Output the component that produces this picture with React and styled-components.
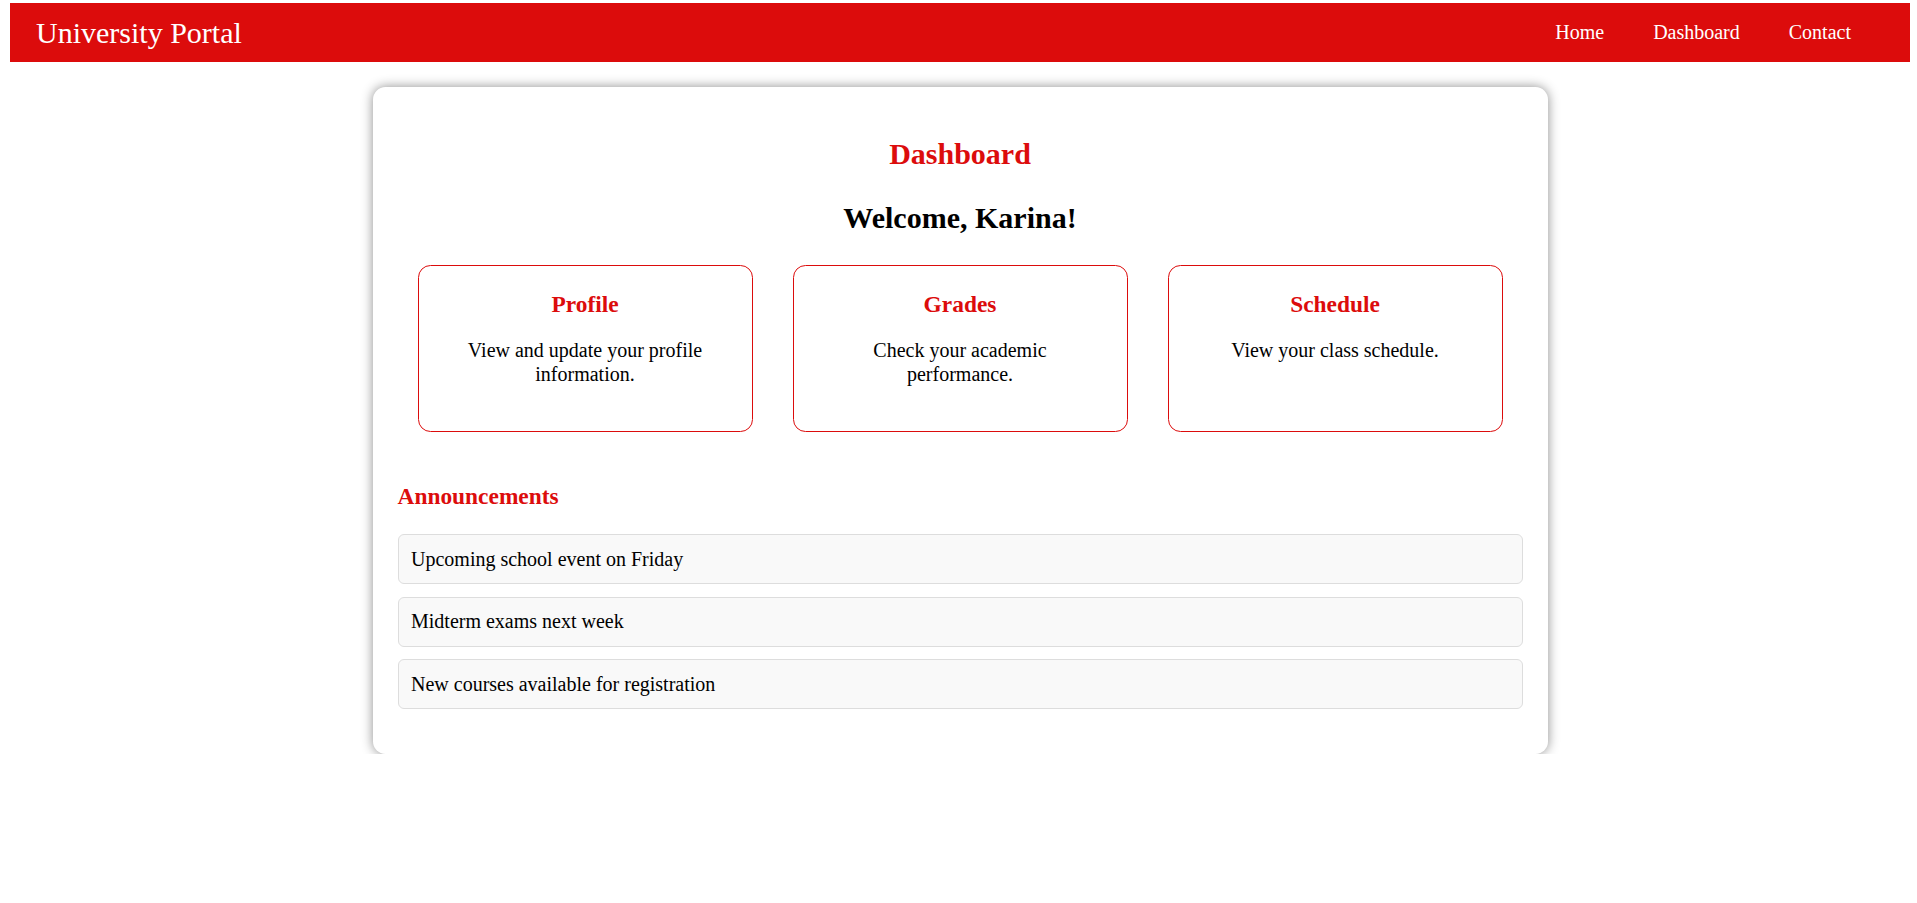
import styled, { createGlobalStyle } from "styled-components";

const GlobalStyle = createGlobalStyle`
  * {
    box-sizing: border-box;
  }
  body {
    margin: 3px 7px 0 10px;
    font-family: "Liberation Serif", "Times New Roman", serif;
    background: #fff;
    color: #000;
  }
`;

const RED = "#dc0c0c";

const Header = styled.header`
  display: flex;
  align-items: center;
  justify-content: space-between;
  background: ${RED};
  padding: 12.5px 59px 12.5px 26px;
`;

const Brand = styled.h1`
  margin: 0;
  font-size: 30px;
  font-weight: normal;
  color: #fff;
`;

const Nav = styled.nav`
  display: flex;
  gap: 49px;
`;

const NavLink = styled.a`
  color: #fff;
  font-size: 20px;
  text-decoration: none;
  cursor: pointer;
`;

const Panel = styled.main`
  width: 1175px;
  margin: 25px auto 0;
  padding: 25px;
  background: #fff;
  border-radius: 12.5px;
  box-shadow: 0 0 12px rgba(0, 0, 0, 0.45);
`;

const PageTitle = styled.h2`
  margin: 25px 0 0;
  font-size: 30px;
  text-align: center;
  color: ${RED};
`;

const Welcome = styled.h2`
  margin: 30px 0 0;
  font-size: 30px;
  text-align: center;
`;

const Tiles = styled.div`
  display: flex;
  margin-top: 30px;
`;

const Tile = styled.section`
  flex: 1;
  margin: 0 20px;
  padding: 25px;
  border: 1px solid ${RED};
  border-radius: 12.5px;
  text-align: center;
`;

const TileTitle = styled.h3`
  margin: 0;
  font-size: 23.4px;
  color: ${RED};
`;

const TileText = styled.p`
  margin: 21px 0 20px;
  font-size: 20px;
  line-height: 23.5px;
`;

const SectionTitle = styled.h3`
  margin: 51px 0 24px;
  font-size: 23.4px;
  color: ${RED};
`;

const List = styled.ul`
  list-style: none;
  margin: 0 0 20px;
  padding: 0;
  display: flex;
  flex-direction: column;
  gap: 12.5px;
`;

const Item = styled.li`
  padding: 12.5px;
  font-size: 20px;
  background: #f9f9f9;
  border: 1px solid #ddd;
  border-radius: 6px;
`;

const tiles = [
  { title: "Profile", text: "View and update your profile information." },
  { title: "Grades", text: "Check your academic performance." },
  { title: "Schedule", text: "View your class schedule." },
];

const news = [
  "Upcoming school event on Friday",
  "Midterm exams next week",
  "New courses available for registration",
];

export default function App() {
  return (
    <>
      <GlobalStyle />
      <Header>
        <Brand>University Portal</Brand>
        <Nav>
          <NavLink>Home</NavLink>
          <NavLink>Dashboard</NavLink>
          <NavLink>Contact</NavLink>
        </Nav>
      </Header>

      <Panel>
        <PageTitle>Dashboard</PageTitle>
        <Welcome>Welcome, Karina!</Welcome>

        <Tiles>
          {tiles.map((t) => (
            <Tile key={t.title}>
              <TileTitle>{t.title}</TileTitle>
              <TileText>{t.text}</TileText>
            </Tile>
          ))}
        </Tiles>

        <SectionTitle>Announcements</SectionTitle>
        <List>
          {news.map((n) => (
            <Item key={n}>{n}</Item>
          ))}
        </List>
      </Panel>
    </>
  );
}
